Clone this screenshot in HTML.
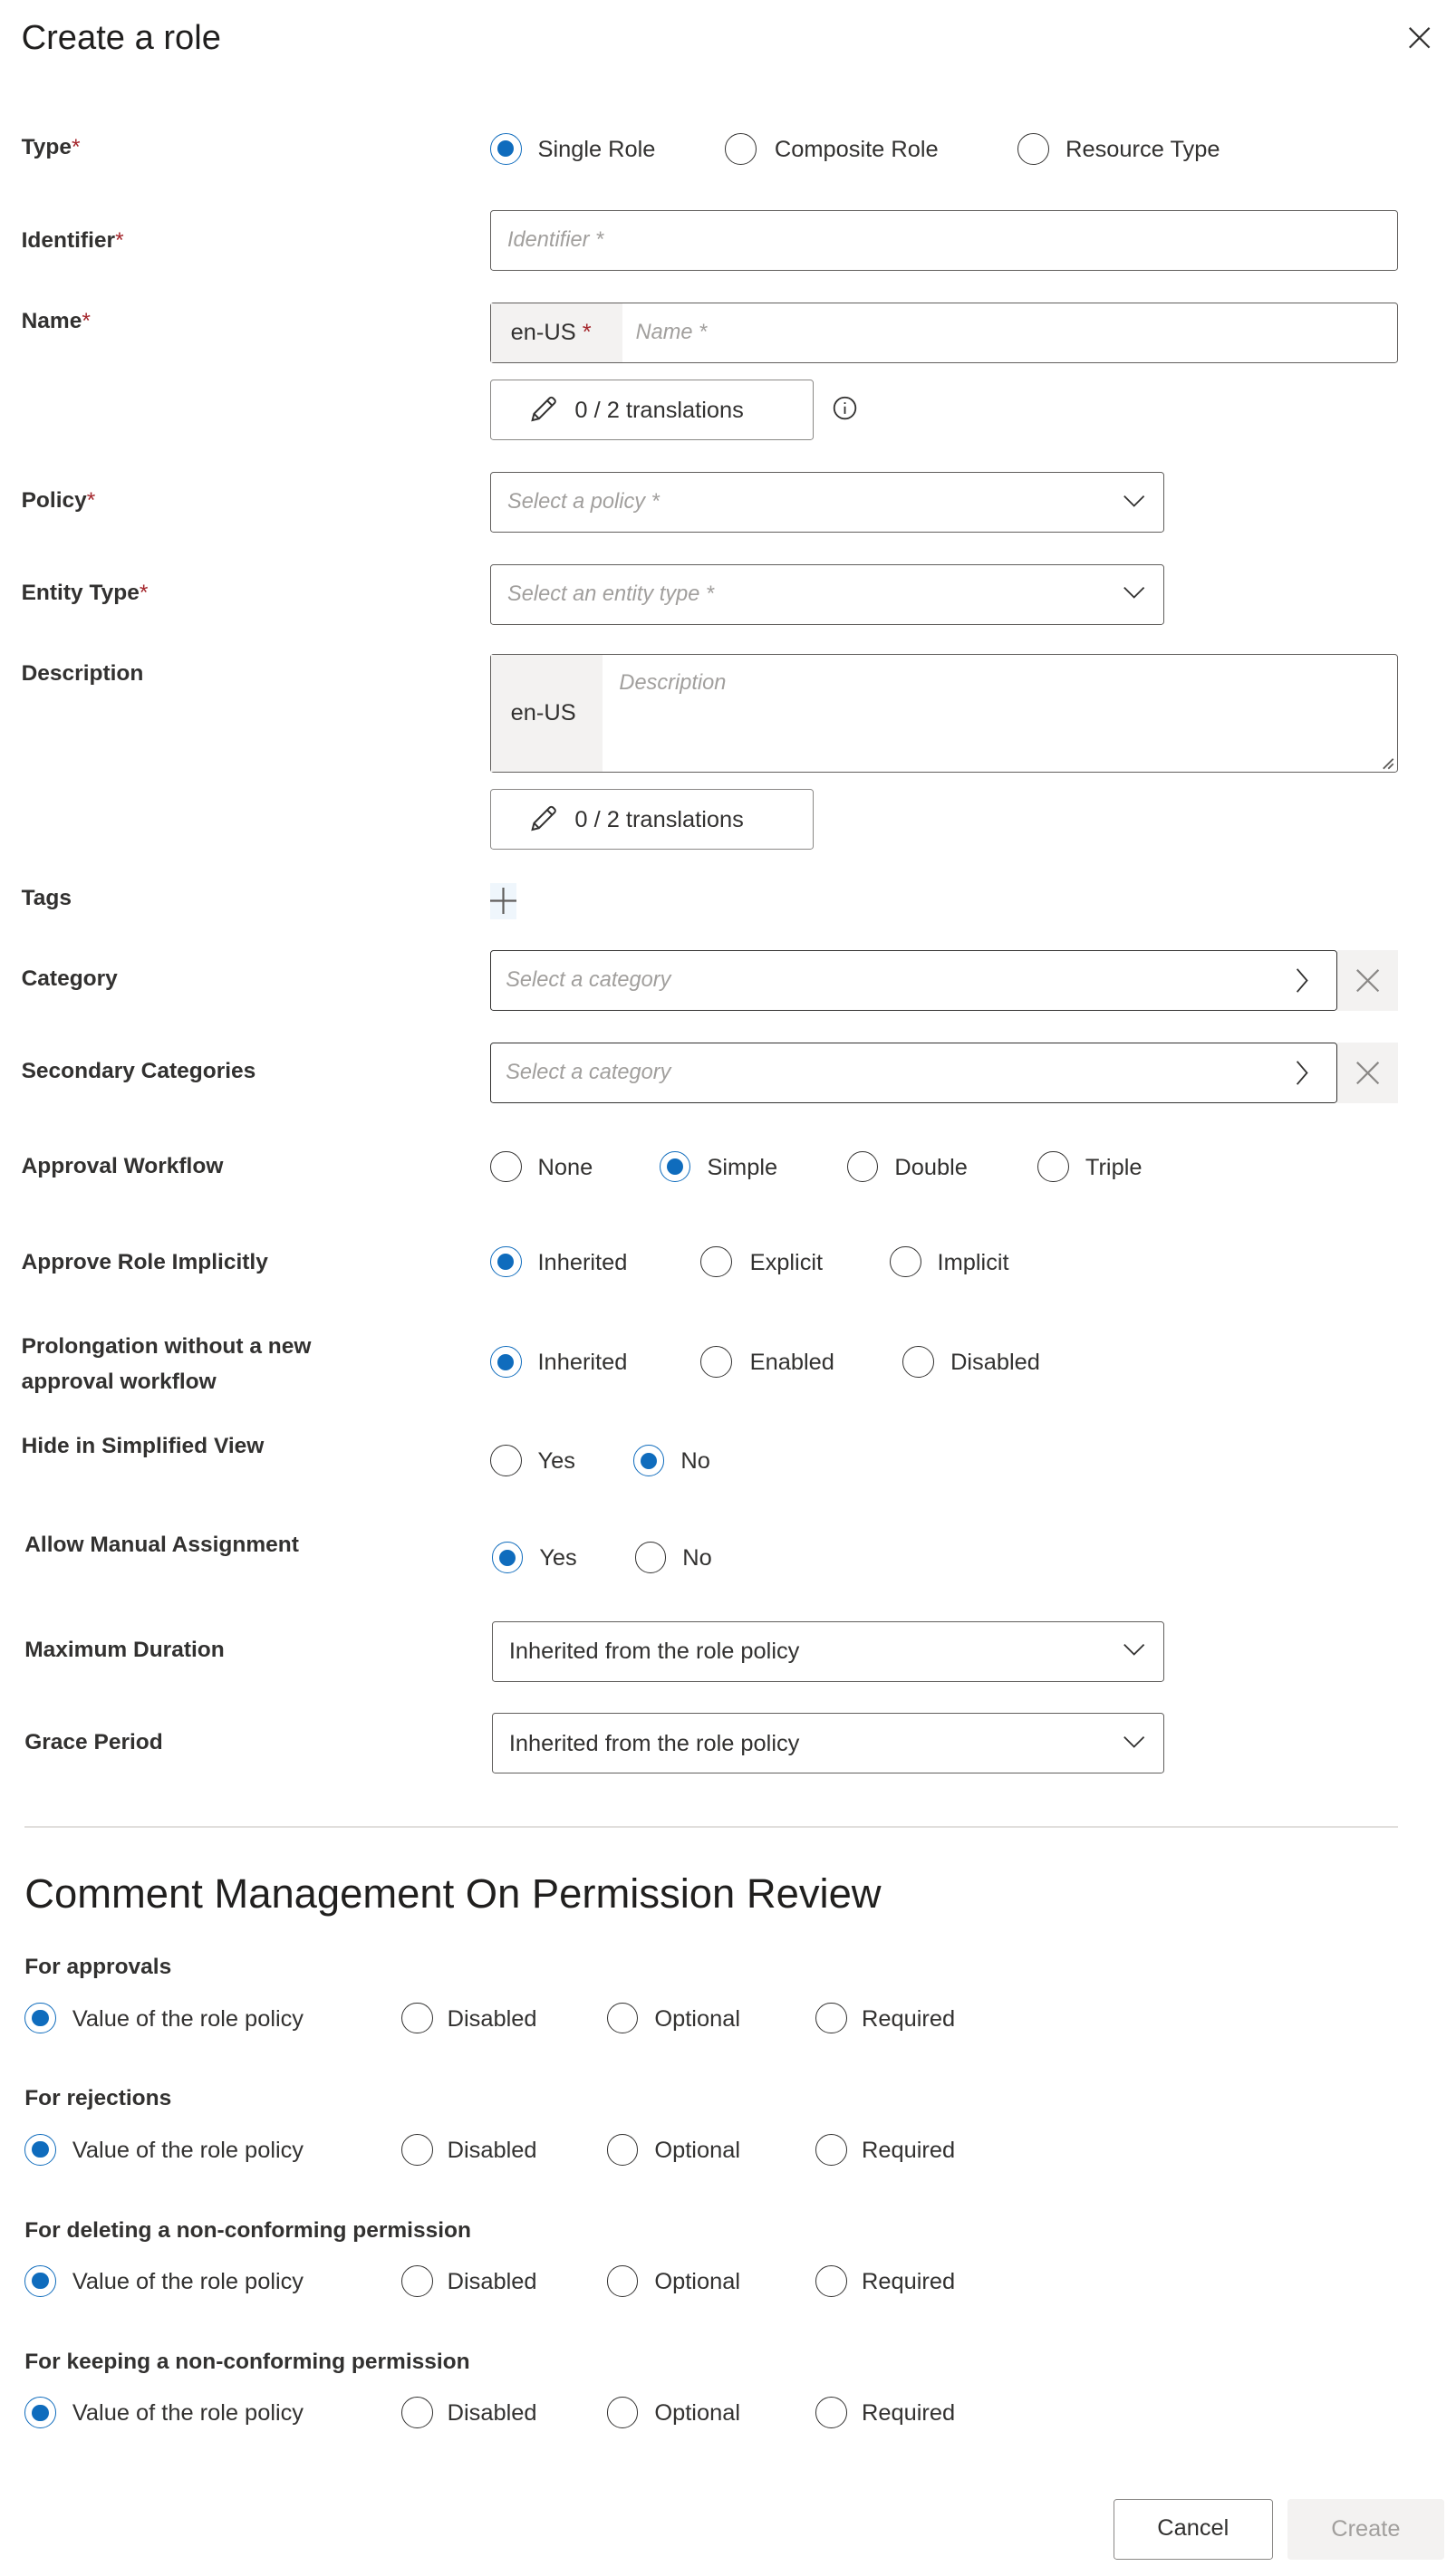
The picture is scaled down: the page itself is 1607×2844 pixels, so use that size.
<!DOCTYPE html>
<html><head><meta charset="utf-8"><style>
html,body{margin:0;padding:0;background:#fff;overflow:hidden;width:1607px;height:2844px}
#w{zoom:1.815;position:relative;width:885px;height:1567px;font-family:"Liberation Sans",sans-serif;color:#323130;font-size:14px}
#w div,#w span{position:absolute;white-space:nowrap}
.l{left:13px;font-weight:bold;font-size:13.5px;line-height:18px}
.l b{color:#a4262c;font-weight:normal}
.r{width:18px;height:18px;border:1px solid #323130;border-radius:50%;box-sizing:content-box}
.r.c{border-color:#0f6cbd}
.r.c::after{content:"";position:absolute;left:4px;top:4px;width:10px;height:10px;border-radius:50%;background:#0f6cbd}
.t{font-size:14px;line-height:20px}
.in{border:1px solid #605e5c;border-radius:2px;box-sizing:border-box;background:#fff}
.ph{font-style:italic;color:#a19f9d;font-size:13px}
.pre{background:#f3f2f1;top:0;bottom:0;left:0}
.btn{border:1px solid #8a8886;border-radius:2px;box-sizing:border-box;background:#fff}
</style></head><body><div id="w">
<div style="left:13px;top:8px;font-size:21px;line-height:30px;color:#201f1e">Create a role</div>
<svg style="position:absolute;left:856px;top:16px" width="14" height="14" viewBox="0 0 14 14"><path d="M1 1L13 13M13 1L1 13" stroke="#323130" stroke-width="1.2"/></svg>

<div class="l" style="top:81px">Type<b>*</b></div>
<div class="r c" style="left:298px;top:81px"></div><div class="t" style="left:327px;top:81px">Single Role</div>
<div class="r" style="left:441px;top:81px"></div><div class="t" style="left:471px;top:81px">Composite Role</div>
<div class="r" style="left:619px;top:81px"></div><div class="t" style="left:648px;top:81px">Resource Type</div>

<div class="l" style="top:138px">Identifier<b>*</b></div>
<div class="in" style="left:298px;top:128px;width:552px;height:37px"><span class="ph" style="left:10px;top:10px">Identifier *</span></div>

<div class="l" style="top:187px">Name<b>*</b></div>
<div class="in" style="left:298px;top:184px;width:552px;height:37px"><span class="pre" style="width:80px"></span><span class="t" style="left:12px;top:8px">en-US <span style="position:static;color:#a4262c">*</span></span><span class="ph" style="left:88px;top:10px">Name *</span></div>
<div class="btn" style="left:298px;top:231px;width:197px;height:37px"><svg style="position:absolute;left:23px;top:8px" width="18" height="18" viewBox="0 0 18 18"><path d="M2 16l1-4L12.5 2.5a1.5 1.5 0 012 0l1 1a1.5 1.5 0 010 2L6 15zM11 4l3 3M3 12l3 3" fill="none" stroke="#323130" stroke-width="1.1"/></svg><span class="t" style="left:51px;top:8px">0 / 2 translations</span></div>
<svg style="position:absolute;left:506px;top:240px" width="16" height="16" viewBox="0 0 16 16"><circle cx="8" cy="8" r="6.5" fill="none" stroke="#323130"/><path d="M8 7v4.5M8 4.5v1" stroke="#323130"/></svg>

<div class="l" style="top:296px">Policy<b>*</b></div>
<div class="in" style="left:298px;top:287px;width:410px;height:37px"><span class="ph" style="left:10px;top:10px">Select a policy *</span><svg style="position:absolute;left:384px;top:12px" width="14" height="10" viewBox="0 0 14 10"><path d="M1 2l6 6 6-6" fill="none" stroke="#323130"/></svg></div>
<div class="l" style="top:352px">Entity Type<b>*</b></div>
<div class="in" style="left:298px;top:343px;width:410px;height:37px"><span class="ph" style="left:10px;top:10px">Select an entity type *</span><svg style="position:absolute;left:384px;top:12px" width="14" height="10" viewBox="0 0 14 10"><path d="M1 2l6 6 6-6" fill="none" stroke="#323130"/></svg></div>

<div class="l" style="top:401px">Description</div>
<div class="in" style="left:298px;top:398px;width:552px;height:72px"><span class="pre" style="width:68px"></span><span class="t" style="left:12px;top:25px">en-US</span><span class="ph" style="left:78px;top:9px">Description</span><svg style="position:absolute;right:1px;bottom:1px" width="8" height="8" viewBox="0 0 8 8"><path d="M1 7L7 1M4 7L7 4" stroke="#605e5c"/></svg></div>
<div class="btn" style="left:298px;top:480px;width:197px;height:37px"><svg style="position:absolute;left:23px;top:8px" width="18" height="18" viewBox="0 0 18 18"><path d="M2 16l1-4L12.5 2.5a1.5 1.5 0 012 0l1 1a1.5 1.5 0 010 2L6 15zM11 4l3 3M3 12l3 3" fill="none" stroke="#323130" stroke-width="1.1"/></svg><span class="t" style="left:51px;top:8px">0 / 2 translations</span></div>

<div class="l" style="top:538px">Tags</div>
<div style="left:298px;top:537px;width:16px;height:22px;background:#eff6fc"></div>
<svg style="position:absolute;left:298px;top:540px" width="16" height="16" viewBox="0 0 16 16"><path d="M8 0v16M0 8h16" stroke="#605e5c" stroke-width="1.2"/></svg>

<div class="l" style="top:587px">Category</div>
<div class="in" style="left:298px;top:578px;width:515px;height:37px;border-color:#323130"><span class="ph" style="left:9px;top:10px">Select a category</span><svg style="position:absolute;left:488px;top:10px" width="10" height="16" viewBox="0 0 10 16"><path d="M2 1l6 7-6 7" fill="none" stroke="#323130"/></svg></div>
<div style="left:813px;top:578px;width:37px;height:37px;background:#f3f2f1"><svg style="position:absolute;left:11px;top:11px" width="15" height="15" viewBox="0 0 15 15"><path d="M1 1L14 14M14 1L1 14" stroke="#8a8886" stroke-width="1.2"/></svg></div>
<div class="l" style="top:643px">Secondary Categories</div>
<div class="in" style="left:298px;top:634px;width:515px;height:37px;border-color:#323130"><span class="ph" style="left:9px;top:10px">Select a category</span><svg style="position:absolute;left:488px;top:10px" width="10" height="16" viewBox="0 0 10 16"><path d="M2 1l6 7-6 7" fill="none" stroke="#323130"/></svg></div>
<div style="left:813px;top:634px;width:37px;height:37px;background:#f3f2f1"><svg style="position:absolute;left:11px;top:11px" width="15" height="15" viewBox="0 0 15 15"><path d="M1 1L14 14M14 1L1 14" stroke="#8a8886" stroke-width="1.2"/></svg></div>

<div class="l" style="top:701px">Approval Workflow</div>
<div class="r" style="left:298px;top:700px"></div><div class="t" style="left:327px;top:700px">None</div>
<div class="r c" style="left:401px;top:700px"></div><div class="t" style="left:430px;top:700px">Simple</div>
<div class="r" style="left:515px;top:700px"></div><div class="t" style="left:544px;top:700px">Double</div>
<div class="r" style="left:631px;top:700px"></div><div class="t" style="left:660px;top:700px">Triple</div>

<div class="l" style="top:759px">Approve Role Implicitly</div>
<div class="r c" style="left:298px;top:758px"></div><div class="t" style="left:327px;top:758px">Inherited</div>
<div class="r" style="left:426px;top:758px"></div><div class="t" style="left:456px;top:758px">Explicit</div>
<div class="r" style="left:541px;top:758px"></div><div class="t" style="left:570px;top:758px">Implicit</div>

<div class="l" style="top:808px;line-height:22px;white-space:normal">Prolongation without a new<br>approval workflow</div>
<div class="r c" style="left:298px;top:819px"></div><div class="t" style="left:327px;top:819px">Inherited</div>
<div class="r" style="left:426px;top:819px"></div><div class="t" style="left:456px;top:819px">Enabled</div>
<div class="r" style="left:549px;top:819px"></div><div class="t" style="left:578px;top:819px">Disabled</div>

<div class="l" style="top:871px">Hide in Simplified View</div>
<div class="r" style="left:298px;top:879px"></div><div class="t" style="left:327px;top:879px">Yes</div>
<div class="r c" style="left:385px;top:879px"></div><div class="t" style="left:414px;top:879px">No</div>

<div class="l" style="left:15px;top:931px">Allow Manual Assignment</div>
<div class="r c" style="left:299px;top:938px"></div><div class="t" style="left:328px;top:938px">Yes</div>
<div class="r" style="left:386px;top:938px"></div><div class="t" style="left:415px;top:938px">No</div>

<div class="l" style="left:15px;top:995px">Maximum Duration</div>
<div class="in" style="left:299px;top:986px;width:409px;height:37px"><span class="t" style="left:10px;top:8px">Inherited from the role policy</span><svg style="position:absolute;left:383px;top:12px" width="14" height="10" viewBox="0 0 14 10"><path d="M1 2l6 6 6-6" fill="none" stroke="#323130"/></svg></div>
<div class="l" style="left:15px;top:1051px">Grace Period</div>
<div class="in" style="left:299px;top:1042px;width:409px;height:37px"><span class="t" style="left:10px;top:8px">Inherited from the role policy</span><svg style="position:absolute;left:383px;top:12px" width="14" height="10" viewBox="0 0 14 10"><path d="M1 2l6 6 6-6" fill="none" stroke="#323130"/></svg></div>

<div style="left:15px;top:1111px;width:835px;height:1px;background:#e1dfdd"></div>
<div style="left:15px;top:1135px;font-size:25px;line-height:34px;color:#201f1e">Comment Management On Permission Review</div>

<div class="l" style="left:15px;top:1188px">For approvals</div>
<div class="r c" style="left:15px;top:1218px"></div><div class="t" style="left:44px;top:1218px">Value of the role policy</div>
<div class="r" style="left:244px;top:1218px"></div><div class="t" style="left:272px;top:1218px">Disabled</div>
<div class="r" style="left:369px;top:1218px"></div><div class="t" style="left:398px;top:1218px">Optional</div>
<div class="r" style="left:496px;top:1218px"></div><div class="t" style="left:524px;top:1218px">Required</div>

<div class="l" style="left:15px;top:1268px">For rejections</div>
<div class="r c" style="left:15px;top:1298px"></div><div class="t" style="left:44px;top:1298px">Value of the role policy</div>
<div class="r" style="left:244px;top:1298px"></div><div class="t" style="left:272px;top:1298px">Disabled</div>
<div class="r" style="left:369px;top:1298px"></div><div class="t" style="left:398px;top:1298px">Optional</div>
<div class="r" style="left:496px;top:1298px"></div><div class="t" style="left:524px;top:1298px">Required</div>

<div class="l" style="left:15px;top:1348px">For deleting a non-conforming permission</div>
<div class="r c" style="left:15px;top:1378px"></div><div class="t" style="left:44px;top:1378px">Value of the role policy</div>
<div class="r" style="left:244px;top:1378px"></div><div class="t" style="left:272px;top:1378px">Disabled</div>
<div class="r" style="left:369px;top:1378px"></div><div class="t" style="left:398px;top:1378px">Optional</div>
<div class="r" style="left:496px;top:1378px"></div><div class="t" style="left:524px;top:1378px">Required</div>

<div class="l" style="left:15px;top:1428px">For keeping a non-conforming permission</div>
<div class="r c" style="left:15px;top:1458px"></div><div class="t" style="left:44px;top:1458px">Value of the role policy</div>
<div class="r" style="left:244px;top:1458px"></div><div class="t" style="left:272px;top:1458px">Disabled</div>
<div class="r" style="left:369px;top:1458px"></div><div class="t" style="left:398px;top:1458px">Optional</div>
<div class="r" style="left:496px;top:1458px"></div><div class="t" style="left:524px;top:1458px">Required</div>

<div class="btn" style="left:677px;top:1520px;width:97px;height:37px;text-align:center;line-height:35px;border-color:#8a8886">Cancel</div>
<div style="left:783px;top:1520px;width:95px;height:37px;background:#f3f2f1;color:#a19f9d;text-align:center;line-height:37px;border-radius:2px">Create</div>
</div></body></html>
